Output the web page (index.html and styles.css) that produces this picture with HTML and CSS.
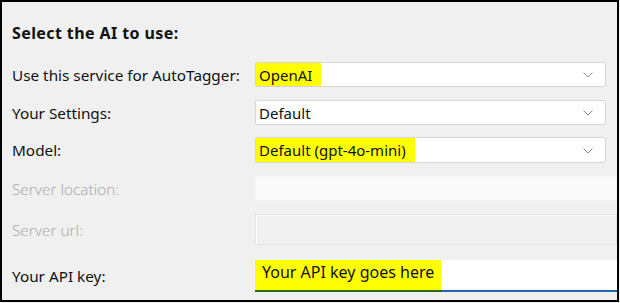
FILE: index.html
```html
<!DOCTYPE html>
<html>
<head>
<meta charset="utf-8">
<link rel="stylesheet" href="styles.css">
</head>
<body>
<div class="frame">
  <div class="title">Select the AI to use:</div>
  <div class="rows">
    <div class="row r-select">
      <div class="label">Use this service for AutoTagger:</div>
      <div class="select"><span class="hl">OpenAI</span><span class="fill"></span><svg class="chev" width="10" height="6" viewBox="0 0 10 6"><polyline points="0.5,0.5 5,5 9.5,0.5" fill="none" stroke="#8c8c8c" stroke-width="1"/></svg></div>
    </div>
    <div class="row r-select">
      <div class="label">Your Settings:</div>
      <div class="select"><span class="plain">Default</span><span class="fill"></span><svg class="chev" width="10" height="6" viewBox="0 0 10 6"><polyline points="0.5,0.5 5,5 9.5,0.5" fill="none" stroke="#8c8c8c" stroke-width="1"/></svg></div>
    </div>
    <div class="row r-select r-tight">
      <div class="label">Model:</div>
      <div class="select tall"><span class="hl">Default (gpt-4o-mini)</span><span class="fill"></span><svg class="chev" width="10" height="6" viewBox="0 0 10 6"><polyline points="0.5,0.5 5,5 9.5,0.5" fill="none" stroke="#8c8c8c" stroke-width="1"/></svg></div>
    </div>
    <div class="row r-loc">
      <div class="label disabled">Server location:</div>
      <div class="box-loc"></div>
    </div>
    <div class="row r-url">
      <div class="label disabled">Server url:</div>
      <div class="box-url"></div>
    </div>
    <div class="row r-key">
      <div class="label">Your API key:</div>
      <div class="box-key"><span class="hl-key">Your API key goes here</span></div>
    </div>
  </div>
</div>
</body>
</html>
```

FILE: styles.css
```css
html, body {
  margin: 0;
  padding: 0;
  background: #f0f0f0;
}
.frame {
  box-sizing: border-box;
  width: 619px;
  height: 302px;
  border: 2px solid #000;
  background: #f0f0f0;
  overflow: hidden;
  padding-left: 10px;
  font-family: "Noto Sans", "Open Sans", sans-serif;
  font-size: 15.3px;
  color: #111;
}
.title {
  margin-top: 21px;
  height: 20px;
  line-height: 20px;
  font-weight: bold;
  font-size: 16px;
  letter-spacing: 0.4px;
}
.rows {
  margin-top: 19px;
  display: flex;
  flex-direction: column;
  gap: 13px;
}
.row {
  display: flex;
  align-items: center;
}
.label {
  width: 243px;
  flex: none;
  white-space: nowrap;
}
.label.disabled {
  color: #ababab;
  font-weight: 300;
}
.r-select { height: 25px; }
.r-tight { margin-top: -1px; height: 26px; }
.r-loc { height: 25px; }
.r-url { height: 31px; }
.r-key { height: 32px; margin-top: 2px; }

.select {
  box-sizing: border-box;
  width: 351px;
  height: 25px;
  background: #fff;
  border: 1px solid #d6d6d6;
  border-radius: 2px;
  display: flex;
  align-items: stretch;
  font-size: 15px;
}
.select.tall { height: 26px; }
.hl {
  background: #ffff00;
  padding: 0 9px 0 3px;
  display: flex;
  align-items: center;
}
.plain {
  padding: 0 0 0 3px;
  display: flex;
  align-items: center;
}
.fill { flex: 1; }
.chev {
  align-self: center;
  margin-right: 12px;
  margin-top: 1px;
}
.box-loc {
  box-sizing: border-box;
  width: 380px;
  height: 25px;
  background: #fafafa;
  border: 1px solid #f4f4f4;
}
.box-url {
  box-sizing: border-box;
  width: 380px;
  height: 31px;
  background: #f0f0f0;
  border: 1px solid #e4e4e4;
  box-shadow: inset 1px 1px 0 #fbfbfb;
}
.box-key {
  box-sizing: border-box;
  width: 380px;
  height: 32px;
  background: #fff;
  border-bottom: 2px solid #1f69ad;
  display: flex;
  align-items: stretch;
}
.hl-key {
  background: #ffff00;
  margin-bottom: -2px;
  border-bottom: 2px solid #2c6a18;
  padding: 0 7px 6px 7px;
  display: flex;
  align-items: center;
  font-size: 16px;
}
```
